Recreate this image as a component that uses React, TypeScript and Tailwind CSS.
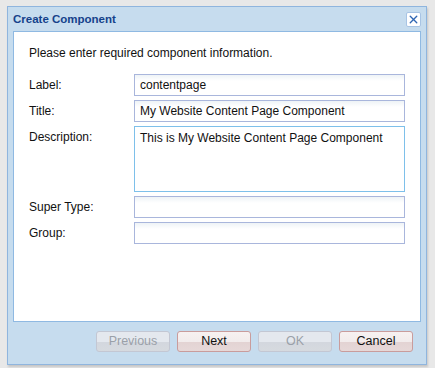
import { X } from 'lucide-react'

const fields = [
  { label: 'Label:', value: 'contentpage' },
  { label: 'Title:', value: 'My Website Content Page Component' },
]

const emptyFields = ['Super Type:', 'Group:']

function WinButton({ text, disabled }: { text: string; disabled?: boolean }) {
  return (
    <button
      disabled={disabled}
      className={
        disabled
          ? 'w-[74px] h-[21px] rounded-[3px] border border-[#c3c7d3] bg-[linear-gradient(#e4e8ee_0%,#e4e8ee_55%,#d3d7de_55%,#d6dadf_100%)] text-[12.5px] text-[#9aa0a8] font-["Liberation_Sans",sans-serif]'
          : 'w-[74px] h-[21px] rounded-[3px] border border-[#c99c9c] bg-[linear-gradient(#f7f1f1_0%,#f1ebeb_55%,#e3d3d3_55%,#e6d8d8_100%)] text-[12.5px] text-[#111] font-["Liberation_Sans",sans-serif]'
      }
    >
      {text}
    </button>
  )
}

export default function App() {
  return (
    <div className="w-[435px] h-[368px] bg-[#e8e8e8] pt-[6px] pl-[7px] font-['Liberation_Sans',sans-serif]">
      <div className="w-[420px] h-[359px] border border-[#8fb5de] bg-[#c6dcee] flex flex-col shadow-[1px_2px_2px_rgba(0,0,0,0.15)]">
        {/* title bar */}
        <div className="h-[24px] flex items-center justify-between pl-[5px] pr-[5px]">
          <span className="text-[11.5px] font-bold text-[#15428b] mt-[1px]">Create Component</span>
          <div className="w-[15px] h-[15px] bg-white border border-[#a8c4e4] rounded-[2px] flex items-center justify-center mt-[1px]">
            <X size={13} strokeWidth={2.5} className="text-[#2f66b3]" />
          </div>
        </div>

        {/* body */}
        <div className="mx-[5px] h-[291px] bg-white border border-[#8fb9e2] px-[15px] pt-[14px]">
          <p className="text-[12px] text-[#111] leading-[15px]">Please enter required component information.</p>

          <div className="mt-[13px] flex flex-col gap-[4px]">
            {fields.map((f) => (
              <div key={f.label} className="flex">
                <div className="w-[105px] pt-[4px] text-[12px] text-[#111] leading-[15px]">{f.label}</div>
                <div className="w-[271px] h-[22px] border border-[#a9b6dc] bg-[linear-gradient(#eef3f6,#ffffff_6px)] pl-[5px] pt-[3px] text-[12px] text-[#111] leading-[15px]">
                  {f.value}
                </div>
              </div>
            ))}
            <div className="flex">
              <div className="w-[105px] pt-[4px] text-[12px] text-[#111] leading-[15px]">Description:</div>
              <div className="w-[271px] h-[66px] border border-[#7ec0ea] bg-white pl-[5px] pt-[4px] text-[12px] text-[#111] leading-[15px]">
                This is My Website Content Page Component
              </div>
            </div>
            {emptyFields.map((l) => (
              <div key={l} className="flex">
                <div className="w-[105px] pt-[4px] text-[12px] text-[#111] leading-[15px]">{l}</div>
                <div className="w-[271px] h-[22px] border border-[#a9b6dc] bg-[linear-gradient(#eef3f6,#ffffff_6px)]"></div>
              </div>
            ))}
          </div>
        </div>

        {/* footer */}
        <div className="flex justify-end gap-[7px] pt-[9px] pr-[13px]">
          <WinButton text="Previous" disabled />
          <WinButton text="Next" />
          <WinButton text="OK" disabled />
          <WinButton text="Cancel" />
        </div>
      </div>
    </div>
  )
}
